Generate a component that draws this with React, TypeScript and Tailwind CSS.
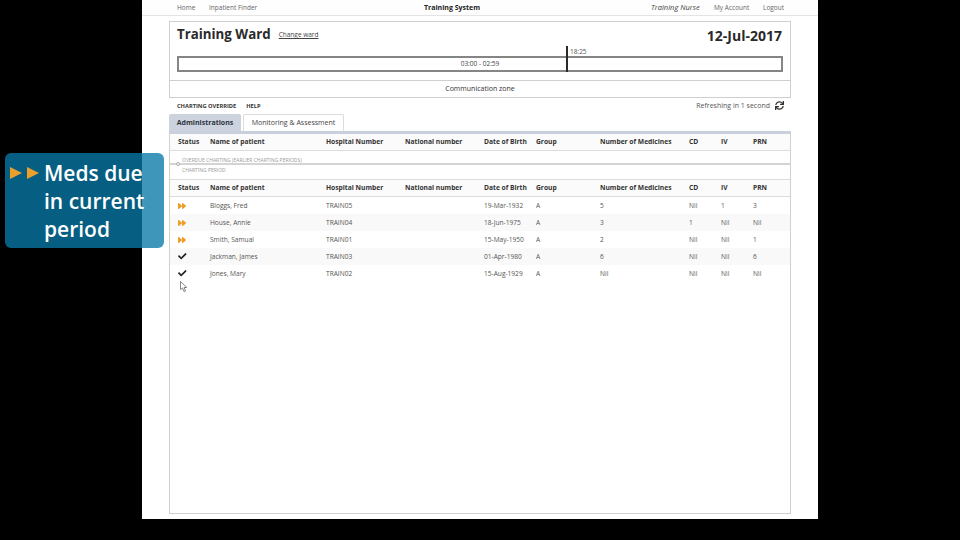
import { FaCheck, FaForward, FaSync } from "react-icons/fa"

const columns = "grid grid-cols-[32px_116px_79px_79px_52px_64px_89px_32px_32px_1fr] pl-[8px] items-center"

const patients = [
    { status: "due", name: "Bloggs, Fred", hospital: "TRAIN05", dob: "19-Mar-1932", group: "A", meds: "5", cd: "Nil", iv: "1", prn: "3" },
    { status: "due", name: "House, Annie", hospital: "TRAIN04", dob: "18-Jun-1975", group: "A", meds: "3", cd: "1", iv: "Nil", prn: "Nil" },
    { status: "due", name: "Smith, Samual", hospital: "TRAIN01", dob: "15-May-1950", group: "A", meds: "2", cd: "Nil", iv: "Nil", prn: "1" },
    { status: "done", name: "Jackman, James", hospital: "TRAIN03", dob: "01-Apr-1980", group: "A", meds: "6", cd: "Nil", iv: "Nil", prn: "6" },
    { status: "done", name: "Jones, Mary", hospital: "TRAIN02", dob: "15-Aug-1929", group: "A", meds: "Nil", cd: "Nil", iv: "Nil", prn: "Nil" },
]

function HeaderRow({ className }: { className: string }) {
    return (
        <div className={`${columns} h-[17px] bg-[#fbfbfb] text-[6.7px] font-bold text-[#333] ${className}`}>
            <span>Status</span>
            <span>Name of patient</span>
            <span>Hospital Number</span>
            <span>National number</span>
            <span>Date of Birth</span>
            <span>Group</span>
            <span>Number of Medicines</span>
            <span>CD</span>
            <span>IV</span>
            <span>PRN</span>
        </div>
    )
}

export default function App() {
    return (
        <div className="relative w-[960px] h-[540px] overflow-hidden bg-black opacity-[.999] font-['Open_Sans',sans-serif]">
            <div className="ml-[142px] w-[676px] h-[519px] bg-white flex flex-col">
                {/* Top nav */}
                <div className="h-[16px] shrink-0 border-b border-[#e4e4e4] bg-[#fefefe] flex items-center pt-[1px] pl-[35px] text-[6.5px] text-[#666]">
                    <span className="w-[32px]">Home</span>
                    <span className="w-[215px]">Inpatient Finder</span>
                    <span className="w-[227px] font-bold text-[7px] text-[#222]">Training System</span>
                    <span className="w-[63px] italic text-[7.5px] text-[#444]">Training Nurse</span>
                    <span className="w-[49px]">My Account</span>
                    <span>Logout</span>
                </div>

                {/* Ward header */}
                <div className="mt-[5px] ml-[27px] w-[622px] h-[77px] shrink-0 border border-[#cfcfcf] flex flex-col">
                    <div className="h-[25px] pt-[1px] flex items-center px-[7px]">
                        <span className="text-[13.3px] font-bold text-[#2a2a2a]">Training Ward</span>
                        <span className="ml-[8px] text-[6.5px] text-[#444] underline">Change ward</span>
                        <span className="ml-auto mr-[1px] text-[14px] font-bold text-[#2a2a2a]">12-Jul-2017</span>
                    </div>
                    <div className="relative mt-[9px] mx-[7px] h-[16px] border-2 border-[#858585] bg-white flex items-center justify-center text-[6.5px] text-[#444]">
                        <span>03:00 - 02:59</span>
                        <div className="absolute left-[387px] top-[-12px] h-[26px] w-[2px] bg-[#2a2a2a]" />
                        <span className="absolute left-[391px] top-[-11px] text-[6.5px] text-[#555]">18:25</span>
                    </div>
                    <div className="mt-[8px] pt-[1px] flex-1 border-t border-[#cfcfcf] flex items-center justify-center text-[7px] text-[#333]">
                        Communication zone
                    </div>
                </div>

                {/* Toolbar */}
                <div className="h-[16px] ml-[35px] w-[607px] shrink-0 flex items-center">
                    <span className="text-[5.7px] font-bold text-[#333]">CHARTING OVERRIDE</span>
                    <span className="ml-[10px] text-[5.7px] font-bold text-[#333]">HELP</span>
                    <span className="ml-auto text-[7px] text-[#555]">Refreshing in 1 second</span>
                    <FaSync className="ml-[5px] mb-[1px] text-[9px] text-[#333]" />
                </div>

                {/* Tabs */}
                <div className="ml-[27px] h-[17px] shrink-0 flex items-end gap-[2px]">
                    <div className="h-[17px] pt-[1px] w-[72px] rounded-t-[2px] bg-[#ccd2de] flex items-center justify-center text-[7px] font-bold text-[#2c3440]">
                        Administrations
                    </div>
                    <div className="h-[17px] pt-[1px] w-[101px] rounded-t-[2px] border border-b-0 border-[#dcdcdc] flex items-center justify-center text-[7px] text-[#444]">
                        Monitoring &amp; Assessment
                    </div>
                </div>

                {/* Table panel */}
                <div className="ml-[27px] w-[622px] h-[383px] shrink-0 border-x border-b border-[#d0d0d0] border-t-[3px] border-t-[#c9cfdd] flex flex-col">
                    <HeaderRow className="border-b border-[#dcdcdc]" />
                    <div className="relative h-[28px] shrink-0 flex flex-col text-[5px] text-[#9a9a9a] pl-[12px]">
                        <span className="mt-[5px] leading-[8px]">OVERDUE CHARTING (EARLIER CHARTING PERIODS)</span>
                        <span className="mt-[2px] leading-[8px]">CHARTING PERIOD</span>
                        <div className="absolute left-0 right-0 top-[12px] h-[2px] bg-[#d4d4d4]" />
                        <div className="absolute left-[6px] top-[11px] w-[4px] h-[4px] rounded-full border border-[#aaa] bg-white" />
                    </div>
                    <HeaderRow className="border-y border-[#dcdcdc] h-[18px]" />
                    {patients.map((p, i) => (
                        <div key={p.hospital} className={`${columns} h-[17px] text-[6.6px] text-[#555] ${i % 2 === 1 ? "bg-[#f9f9f9]" : "bg-white"}`}>
                            <span>
                                {p.status === "due" ? (
                                    <FaForward className="block text-[8px] text-[#eba02c]" />
                                ) : (
                                    <FaCheck className="block text-[8.5px] text-[#222]" />
                                )}
                            </span>
                            <span>{p.name}</span>
                            <span>{p.hospital}</span>
                            <span />
                            <span>{p.dob}</span>
                            <span>{p.group}</span>
                            <span>{p.meds}</span>
                            <span>{p.cd}</span>
                            <span>{p.iv}</span>
                            <span>{p.prn}</span>
                        </div>
                    ))}
                </div>
            </div>

            {/* Mouse pointer */}
            <svg className="absolute left-[180px] top-[281px]" width="8" height="12" viewBox="0 0 8 12">
                <path d="M0.5 0.5 L0.5 8.5 L2.5 7 L4 10.5 L5.5 10 L4 6.5 L6.8 6.5 Z" fill="#fff" stroke="#555" strokeWidth="0.7" />
            </svg>

            {/* Tutorial callout */}
            <div className="absolute left-[5px] top-[153px] w-[159px] h-[95px] rounded-[6px] bg-[#087aa7]/78 flex pl-[5px] pt-[6px]">
                <div className="flex gap-[5px] pt-[8px] h-fit">
                    <svg width="12" height="12" viewBox="0 0 12 12"><path d="M0 0 L12 6 L0 12 Z" fill="#eba02c" /></svg>
                    <svg width="12" height="12" viewBox="0 0 12 12"><path d="M0 0 L12 6 L0 12 Z" fill="#eba02c" /></svg>
                </div>
                <div className="ml-[5px] text-[21px] leading-[28px] font-semibold text-white">
                    Meds due<br />in current<br />period
                </div>
            </div>
        </div>
    )
}
